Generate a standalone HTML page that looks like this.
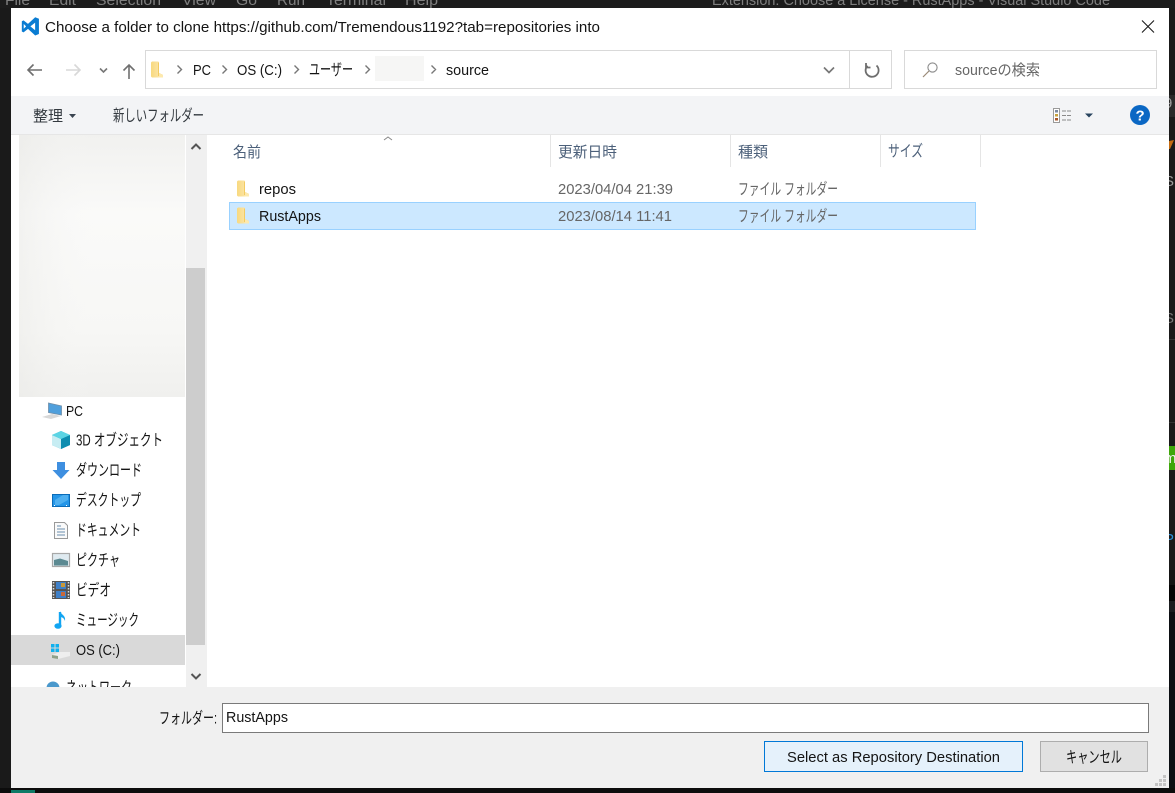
<!DOCTYPE html>
<html><head><meta charset="utf-8"><style>
html,body{margin:0;padding:0;background:#1a1a1a;width:1175px;height:793px;overflow:hidden}
svg{display:block}
text{font-family:"Liberation Sans","Noto Sans CJK JP",sans-serif;font-size:15px;fill:#141414;white-space:pre}
.g{fill:#666}
.m{fill:#7f7f7f}
.h{fill:#4c607a}
.t{fill:#33393f}
.k{font-size:16px}
</style></head><body>
<svg xmlns="http://www.w3.org/2000/svg" width="1175" height="793" viewBox="0 0 1175 793">
<defs>
<linearGradient id="blur" x1="0" y1="0" x2="0" y2="1"><stop offset="0" stop-color="#f1f1ef"/><stop offset=".3" stop-color="#fafaf9"/><stop offset=".75" stop-color="#f7f7f5"/><stop offset="1" stop-color="#f0f0ee"/></linearGradient>
<linearGradient id="blurx" x1="0" y1="0" x2="1" y2="0"><stop offset="0" stop-color="#e9e9e6" stop-opacity=".45"/><stop offset=".45" stop-color="#f8f8f7" stop-opacity="0"/><stop offset="1" stop-color="#fafafa" stop-opacity="0"/></linearGradient>
<linearGradient id="fold" x1="0" y1="0" x2="1" y2="0"><stop offset="0" stop-color="#f8d97f"/><stop offset=".6" stop-color="#fbe3a0"/><stop offset="1" stop-color="#fdeec4"/></linearGradient>
<g id="folder"><path d="M0 1.500l1-1h6.500l.5 1V12l4 2v2.500H1l-1-1z" fill="url(#fold)"/><path d="M7 1.500h1V12l4 2v1H7z" fill="#f3cb62"/><path d="M8 12l4 2v2.500H8z" fill="#fde9ae"/></g>
</defs>
<rect width="1175" height="793" fill="#1a1a1a"/>
<rect x="0" y="0" width="1175" height="8" fill="#1c1c1c"/>
<rect x="0" y="788" width="1175" height="5" fill="#0c0c0c"/>
<rect x="11" y="790" width="24" height="3" fill="#0f7a66"/>
<!-- background window remnants on right edge -->
<rect x="1169" y="95" width="6" height="22" fill="#2a2a2a"/>
<path d="M1169 141l5-1-4 9h-1z" fill="#c46a10"/>
<rect x="1169" y="339" width="6" height="1" fill="#333"/>
<rect x="1169" y="422" width="6" height="1" fill="#333"/>
<rect x="1169" y="446" width="6" height="24" fill="#3fa60a"/>
<rect x="1169" y="570" width="6" height="15" fill="#141414"/>
<rect x="1169" y="585" width="6" height="16" fill="#050505"/>
<rect x="1169" y="601" width="6" height="11" fill="#1b1d20"/>
<rect x="1169" y="612" width="6" height="176" fill="#0c0f13"/>
<text x="1164" y="108" style="fill:#a0a0a0">9</text>
<text x="1164" y="186" style="fill:#9a9a9a">S</text>
<text x="1164" y="323" style="fill:#777">S</text>
<text x="1164" y="463" style="fill:#eee">m</text>
<text x="1164" y="544" style="fill:#2d8fd8">P</text>
<text x="5" y="5" class="m" textLength="25" lengthAdjust="spacingAndGlyphs">File</text>
<text x="49" y="5" class="m" textLength="27" lengthAdjust="spacingAndGlyphs">Edit</text>
<text x="96" y="5" class="m" textLength="65" lengthAdjust="spacingAndGlyphs">Selection</text>
<text x="182" y="5" class="m" textLength="34" lengthAdjust="spacingAndGlyphs">View</text>
<text x="236" y="5" class="m" textLength="21" lengthAdjust="spacingAndGlyphs">Go</text>
<text x="277" y="5" class="m" textLength="28" lengthAdjust="spacingAndGlyphs">Run</text>
<text x="326" y="5" class="m" textLength="60" lengthAdjust="spacingAndGlyphs">Terminal</text>
<text x="405" y="5" class="m" textLength="33" lengthAdjust="spacingAndGlyphs">Help</text>
<text x="712" y="5" class="m" textLength="398" lengthAdjust="spacingAndGlyphs">Extension: Choose a License - RustApps - Visual Studio Code</text>

<rect x="11" y="8" width="1158" height="780" fill="#fff"/>
<!-- title -->
<path d="M17.580 2.390 10 9.330 5.300 5.700 3.500 6.600v10.800l1.800.9 4.700-3.630 7.580 6.940L21.500 20V4zM5.500 9.500 8 12l-2.500 2.500zM17.500 8v8l-5-4z" fill-rule="evenodd" transform="translate(18.500 15) scale(.95)" fill="#0a7cd2"/>
<text x="45" y="32" textLength="555" lengthAdjust="spacingAndGlyphs">Choose a folder to clone https://github.com/Tremendous1192?tab=repositories into</text>
<path d="M1142 20.500l12 12M1154 20.500l-12 12" stroke="#1a1a1a" stroke-width="1.100" fill="none"/>

<!-- nav -->
<path d="M42 70H28M33.500 64.500L28 70l5.500 5.500" stroke="#6f6f6f" stroke-width="1.600" fill="none"/>
<path d="M66 70h14M74.500 64.500L80 70l-5.500 5.500" stroke="#d8d8d8" stroke-width="1.600" fill="none"/>
<path d="M100 68.500l3.500 3.500 3.500-3.500" stroke="#777" stroke-width="1.600" fill="none"/>
<path d="M129 79V65M123.500 70.500L129 65l5.500 5.500" stroke="#6f6f6f" stroke-width="1.600" fill="none"/>
<rect x="145.500" y="50.500" width="746" height="38" fill="#fff" stroke="#d9d9d9"/>
<line x1="849.500" y1="51" x2="849.500" y2="88" stroke="#d9d9d9"/>
<use href="#folder" x="151" y="61"/>
<g fill="none" stroke="#777" stroke-width="1.400">
<path d="M177.500 65.500l4 4-4 4M222.500 65.500l4 4-4 4M294.500 65.500l4 4-4 4M365.500 65.500l4 4-4 4M431.500 65.500l4 4-4 4"/>
<path d="M824 67.500l5 5 5-5" stroke-width="1.700"/>
</g>
<text x="193" y="75" textLength="18" lengthAdjust="spacingAndGlyphs">PC</text>
<text x="237" y="75" textLength="45" lengthAdjust="spacingAndGlyphs">OS (C:)</text>
<text x="309" y="75" class="k" textLength="44" lengthAdjust="spacingAndGlyphs">ユーザー</text>
<rect x="375" y="56" width="49" height="25" fill="#f6f6f5"/>
<text x="446" y="75" textLength="43" lengthAdjust="spacingAndGlyphs">source</text>
<path d="M876.500 65.500a6.500 6.500 0 1 1-9 .2M866 63v4.500h4.500" fill="none" stroke="#6e6e6e" stroke-width="1.800"/>
<rect x="904.500" y="50.500" width="252" height="38" fill="#fff" stroke="#d9d9d9"/>
<circle cx="932.500" cy="67.500" r="4.600" fill="none" stroke="#8a8a8a" stroke-width="1.100"/>
<path d="M929 71l-6 6" stroke="#9a8a78" stroke-width="1.200"/>
<text x="955" y="75" class="g" textLength="85" lengthAdjust="spacingAndGlyphs">sourceの検索</text>

<!-- toolbar -->
<rect x="11" y="96" width="1158" height="38" fill="#f3f4f6"/>
<rect x="11" y="134" width="1158" height="1" fill="#e6e6e6"/>
<text x="33" y="121" class="t" textLength="30" lengthAdjust="spacingAndGlyphs">整理</text>
<path d="M69 114h7l-3.500 4z" fill="#3a4450"/>
<text x="113" y="121" class="t k" textLength="91" lengthAdjust="spacingAndGlyphs">新しいフォルダー</text>
<rect x="1053.500" y="108.500" width="6" height="14" fill="#fff" stroke="#9a9a9a"/>
<rect x="1055" y="110" width="3" height="2.500" fill="#7b8aa0"/><rect x="1055" y="114" width="3" height="2.500" fill="#c6a23e"/><rect x="1055" y="118" width="3" height="2.500" fill="#a8572a"/>
<path d="M1062 111h9M1062 115.500h9M1062 120h9" stroke="#8a8a8a" stroke-dasharray="4 1" fill="none"/>
<path d="M1085 113.500h8l-4 4z" fill="#29445f"/>
<circle cx="1140" cy="115" r="10" fill="#0a67c4"/>
<text x="1135.500" y="120.500" style="fill:#fff;font-weight:bold;font-size:15px">?</text>

<!-- sidebar -->
<rect x="19" y="135" width="166" height="262" fill="url(#blur)"/>
<rect x="19" y="135" width="166" height="262" fill="url(#blurx)"/>
<rect x="186" y="135" width="20" height="552" fill="#f0f0f0"/>
<rect x="186" y="268" width="19" height="377" fill="#cdcdcd"/>
<path d="M191.500 149l4.500-4.500 4.500 4.500" stroke="#555" stroke-width="2" fill="none"/>
<path d="M191.500 674l4.500 4.500 4.500-4.500" stroke="#555" stroke-width="2" fill="none"/>
<rect x="11" y="635" width="174" height="30" fill="#d9d9d9"/>
<!-- PC icon -->
<path d="M48.500 403l13 3v9l-13-2.500z" fill="#4f9fdc" stroke="#6f8ea8" stroke-width=".8"/>
<path d="M42 417l10-3 9 2-10 3z" fill="#d8d8d8"/>
<text x="66" y="416" textLength="17" lengthAdjust="spacingAndGlyphs">PC</text>
<!-- 3D -->
<path d="M61 431l9 4v10l-9 4-9-4v-10z" fill="#2db3cc"/><path d="M52 435l9 4v10l-9-4z" fill="#c7edf3"/><path d="M61 439l9-4v10l-9 4z" fill="#0d8db0"/><path d="M61 431l9 4-9 4-9-4z" fill="#5bd4e4"/>
<text x="76" y="445.500" class="k" textLength="87" lengthAdjust="spacingAndGlyphs">3D オブジェクト</text>
<!-- download -->
<path d="M57 462h8v8h4.500l-8.500 9-8.500-9h4.500z" fill="#3e8fe0"/>
<text x="76" y="475.500" class="k" textLength="66" lengthAdjust="spacingAndGlyphs">ダウンロード</text>
<!-- desktop -->
<rect x="52.500" y="494.500" width="17" height="12" fill="#2596e8" stroke="#0b6cb8"/>
<path d="M55 500l8-5h5v5l-9 5h-4z" fill="#4fb0f0"/>
<path d="M54 505.500h14" stroke="#fff" stroke-dasharray="1 11"/>
<text x="76" y="505.500" class="k" textLength="65" lengthAdjust="spacingAndGlyphs">デスクトップ</text>
<!-- document -->
<path d="M54.500 522.500h10l3 3v13h-13z" fill="#fafafa" stroke="#999"/>
<path d="M57 526h4M57 529h8M57 532h8M57 535h8" stroke="#6b8fae"/>
<text x="76" y="535.500" class="k" textLength="65" lengthAdjust="spacingAndGlyphs">ドキュメント</text>
<!-- pictures -->
<rect x="52.500" y="553.500" width="17" height="13" fill="#dfeaf0" stroke="#a8a8a8" stroke-width="1.200"/>
<path d="M54 560l6-1.500 8 2.500v4.500H54z" fill="#5c8a92"/>
<text x="76" y="565.500" class="k" textLength="44" lengthAdjust="spacingAndGlyphs">ピクチャ</text>
<!-- video -->
<rect x="52" y="581" width="18" height="18" fill="#555"/>
<path d="M53.500 582v16M68.500 582v16" stroke="#ddd" stroke-width="1.500" stroke-dasharray="1.500 1.500"/>
<rect x="56" y="582" width="10" height="7" fill="#3f80c8"/><rect x="56" y="591" width="10" height="7" fill="#3f80c8"/>
<rect x="61" y="583" width="4" height="4" fill="#c9993a"/><rect x="61" y="592" width="4" height="4" fill="#c9693a"/>
<text x="76" y="595.500" class="k" textLength="35" lengthAdjust="spacingAndGlyphs">ビデオ</text>
<!-- music -->
<path d="M60 612v14" stroke="#12a5f2" stroke-width="2.400"/><ellipse cx="58" cy="626" rx="3.600" ry="2.800" fill="#12a5f2"/><path d="M60 611c1 4 6 4 5 10-1-3-3-4-5-4z" fill="#12a5f2"/>
<text x="76" y="625.500" class="k" textLength="63" lengthAdjust="spacingAndGlyphs">ミュージック</text>
<!-- OS -->
<g fill="#10b0ee"><rect x="51" y="644" width="3.500" height="3.500"/><rect x="55.500" y="644" width="3.500" height="3.500"/><rect x="51" y="648.500" width="3.500" height="3.500"/><rect x="55.500" y="648.500" width="3.500" height="3.500"/></g>
<path d="M52 655l8-3h10v4l-12 3-6-1z" fill="#eee"/><path d="M52 655l6 1v3l-6-1z" fill="#8fa088"/>
<text x="76" y="655" textLength="44" lengthAdjust="spacingAndGlyphs">OS (C:)</text>
<!-- network -->
<circle cx="53" cy="688" r="6.500" fill="#4a98cc"/>
<text x="66" y="693" class="k" textLength="66" lengthAdjust="spacingAndGlyphs">ネットワーク</text>

<!-- list -->
<rect x="207" y="135" width="962" height="552" fill="#fff"/>
<rect x="206" y="135" width="1" height="552" fill="#f0f0f0"/>
<path d="M384 140l4-3 4 3" stroke="#888" fill="none"/>
<path d="M550.500 135v32M730.500 135v32M880.500 135v32M980.500 135v32" stroke="#e5e5e5" fill="none"/>
<text x="233" y="157" class="h" textLength="28" lengthAdjust="spacingAndGlyphs">名前</text>
<text x="558" y="157" class="h" textLength="59" lengthAdjust="spacingAndGlyphs">更新日時</text>
<text x="738" y="157" class="h" textLength="30" lengthAdjust="spacingAndGlyphs">種類</text>
<text x="888" y="156.500" class="h k" textLength="35" lengthAdjust="spacingAndGlyphs">サイズ</text>
<use href="#folder" x="237" y="180"/>
<text x="259" y="194" textLength="37" lengthAdjust="spacingAndGlyphs">repos</text>
<text x="558" y="194" class="g" textLength="115" lengthAdjust="spacingAndGlyphs">2023/04/04 21:39</text>
<text x="738" y="194.500" class="g k" textLength="100" lengthAdjust="spacingAndGlyphs">ファイル フォルダー</text>
<rect x="229.500" y="202.500" width="746" height="27" fill="#cce8ff" stroke="#99d1ff"/>
<use href="#folder" x="237" y="207"/>
<text x="259" y="221" textLength="62" lengthAdjust="spacingAndGlyphs">RustApps</text>
<text x="558" y="221" class="g" textLength="114" lengthAdjust="spacingAndGlyphs">2023/08/14 11:41</text>
<text x="738" y="221.500" class="g k" textLength="100" lengthAdjust="spacingAndGlyphs">ファイル フォルダー</text>

<!-- bottom -->
<rect x="11" y="687" width="1158" height="101" fill="#f0f0f0"/>
<text x="159" y="723.500" class="k" textLength="58" lengthAdjust="spacingAndGlyphs">フォルダー:</text>
<rect x="222.500" y="703.500" width="926" height="29" fill="#fff" stroke="#7a7a7a"/>
<text x="226" y="722" textLength="62" lengthAdjust="spacingAndGlyphs">RustApps</text>
<rect x="764.500" y="741.500" width="258" height="30" fill="#e5f1fb" stroke="#0078d7"/>
<text x="787" y="762" textLength="213" lengthAdjust="spacingAndGlyphs">Select as Repository Destination</text>
<rect x="1040.500" y="741.500" width="107" height="30" fill="#e1e1e1" stroke="#adadad"/>
<text x="1066" y="762.500" class="k" textLength="56" lengthAdjust="spacingAndGlyphs">キャンセル</text>
<g fill="#c4c4c4"><rect x="1163" y="775" width="3" height="3"/><rect x="1159" y="779" width="3" height="3"/><rect x="1163" y="779" width="3" height="3"/><rect x="1155" y="783" width="3" height="3"/><rect x="1159" y="783" width="3" height="3"/><rect x="1163" y="783" width="3" height="3"/></g>
</svg>
</body></html>
